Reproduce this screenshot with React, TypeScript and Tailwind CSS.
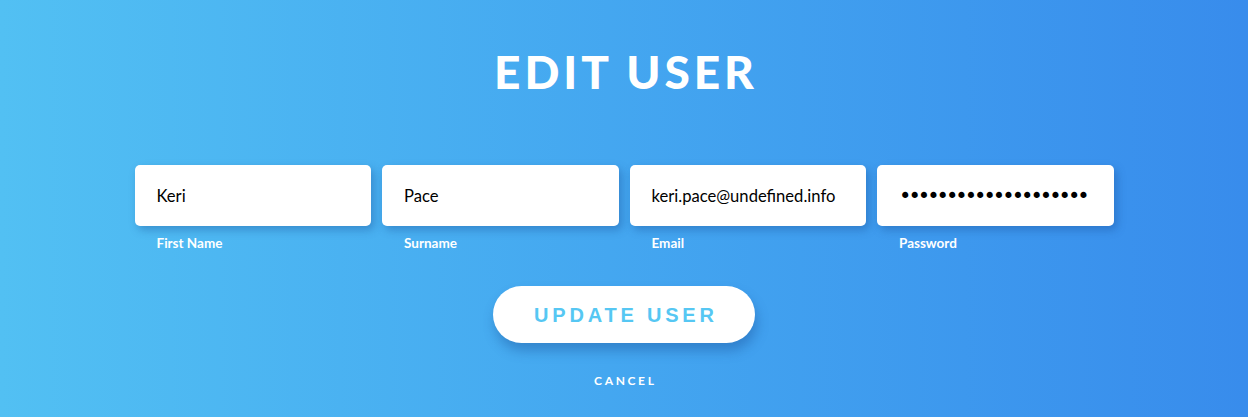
import React, { useState } from "react";

const fields = [
  { id: "first", label: "First Name", type: "text", value: "Keri" },
  { id: "last", label: "Surname", type: "text", value: "Pace" },
  { id: "email", label: "Email", type: "email", value: "keri.pace@undefined.info" },
  { id: "password", label: "Password", type: "password", value: "supersecretpassword1" },
];

const App = () => {
  const [values, setValues] = useState<Record<string, string>>(
    Object.fromEntries(fields.map((f) => [f.id, f.value]))
  );

  return (
    <section className="w-full h-[417px] bg-gradient-to-r from-[#52c0f3] to-[#388cec] flex flex-col items-center font-['Lato',sans-serif] text-white">
      <h1 className="mt-[44px] text-[46px] leading-[56px] font-black tracking-[0.085em] pl-[0.085em]">
        EDIT USER
      </h1>

      <div className="mt-[65px] flex gap-[11px]">
        {fields.map((f) => (
          <div key={f.id} className="flex flex-col">
            <input
              type={f.type}
              value={values[f.id]}
              onChange={(e) => setValues({ ...values, [f.id]: e.target.value })}
              className={`w-[236.5px] h-[61px] rounded-[5px] bg-white px-[22px] text-black outline-none shadow-[3px_4px_8px_rgba(20,70,140,0.35)] ${
                f.type === "password"
                  ? "text-[21px] tracking-[-3px] font-['DejaVu_Sans',sans-serif]"
                  : "text-[16.6px] font-['Lato',sans-serif]"
              }`}
            />
            <label className="mt-[8px] pl-[22px] text-[13.5px] leading-[18px] font-bold">
              {f.label}
            </label>
          </div>
        ))}
      </div>

      <button className="mt-[34px] w-[262px] h-[57px] rounded-full bg-white text-[#56c7f3] font-['Liberation_Sans',sans-serif] font-bold text-[20px] tracking-[0.19em] pl-[0.19em] shadow-[2px_8px_12px_rgba(20,70,140,0.35)]">
        UPDATE USER
      </button>

      <button className="mt-[31px] text-[12px] leading-[14px] font-bold tracking-[0.22em] pl-[0.22em]">
        CANCEL
      </button>
    </section>
  );
};

export default App;
